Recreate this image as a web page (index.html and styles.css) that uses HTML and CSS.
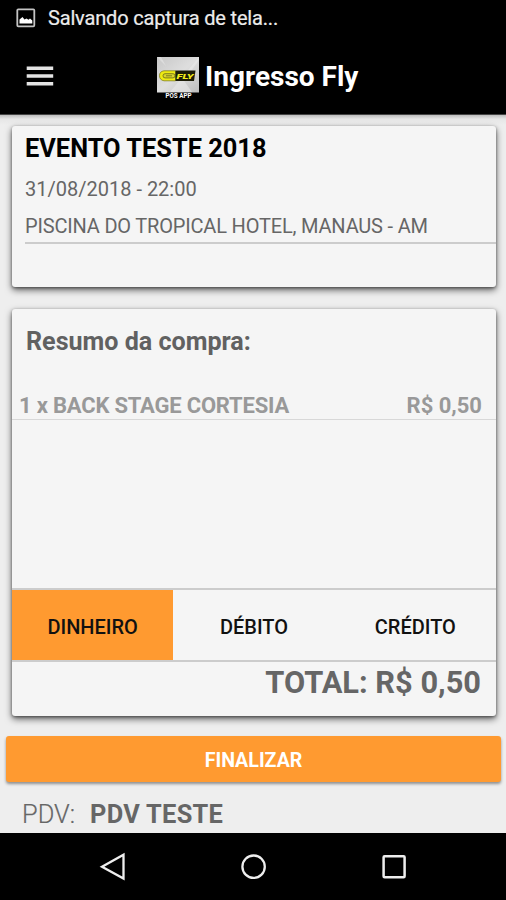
FILE: index.html
```html
<!DOCTYPE html>
<html lang="pt-BR">
<head>
<meta charset="utf-8">
<title>Ingresso Fly</title>
<link rel="stylesheet" href="styles.css">
</head>
<body>
<div class="screen">
  <div class="status">
    <svg class="status-icon" width="20" height="20" viewBox="0 0 20 20"><rect x="1.3" y="1.3" width="17" height="17" rx="1" fill="none" stroke="#c4c4c4" stroke-width="1.8"/><path d="M3.5 15.500V11.500L6.500 9L8.500 11.500L10.500 10.500L12.500 11.800L14 10.500L16.300 12.500V15.500Z" fill="#fff"/></svg>
    <span class="status-text">Salvando captura de tela...</span>
  </div>
  <header class="appbar">
    <svg class="menu" width="28" height="20" viewBox="0 0 28 20"><path d="M.7 2.300H27.200M.7 10H27.200M.7 17.700H27.200" stroke="#e4e4e4" stroke-width="3.400"/></svg>
    <svg class="logo" width="44" height="44" viewBox="0 0 44 44">
      <defs><linearGradient id="g" x1="0" y1="0" x2="1" y2="1"><stop offset="0" stop-color="#c8c8c8"/><stop offset=".5" stop-color="#dedede"/><stop offset="1" stop-color="#bdbdbd"/></linearGradient></defs>
      <rect x="1" y="1" width="42" height="35.500" fill="url(#g)"/>
      <path d="M1 1L10 10L5 1ZM26 22L36 36H14ZM43 4L20 36H14L43 1Z" fill="#eee" opacity=".5"/>
      <path d="M8 14.800H19.500V24.800H8Q3.500 24 3.500 19.700T8 14.800Z" fill="#eeea12" stroke="#777510" stroke-width=".7"/>
      <rect x="7" y="17.700" width="12" height="4.200" rx="2.100" fill="#d8d42c" stroke="#66651a" stroke-width=".8"/>
      <path d="M10 19.800H16" stroke="#66651a" stroke-width=".8"/>
      <path d="M19.500 14.500H39.500L38 25H19.500Z" fill="#1c1c08"/>
      <text class="logo-fly" x="20.500" y="23.300" textLength="17" lengthAdjust="spacingAndGlyphs">FLY</text>
      <text class="logo-app" x="9.500" y="42" textLength="26" lengthAdjust="spacingAndGlyphs">POS APP</text>
    </svg>
    <h1 class="title">Ingresso Fly</h1>
  </header>
  <main class="content">
    <section class="card event">
      <h2 class="event-name">EVENTO TESTE 2018</h2>
      <p class="event-date">31/08/2018 - 22:00</p>
      <p class="event-place">PISCINA DO TROPICAL HOTEL, MANAUS - AM</p>
    </section>
    <section class="card summary">
      <h3 class="summary-title">Resumo da compra:</h3>
      <div class="item"><span class="item-name">1 x BACK STAGE CORTESIA</span><span class="item-price">R$ 0,50</span></div>
      <div class="methods">
        <div class="method active"><span>DINHEIRO</span></div>
        <div class="method"><span>DÉBITO</span></div>
        <div class="method"><span>CRÉDITO</span></div>
      </div>
      <div class="total"><span>TOTAL: R$ 0,50</span></div>
    </section>
    <button class="finish">FINALIZAR</button>
    <p class="pdv"><span class="pdv-label">PDV:</span><span class="pdv-name">PDV TESTE</span></p>
  </main>
  <nav class="navbar">
    <svg width="28" height="30" viewBox="0 0 28 30"><path d="M3 14.700L24.500 2.800V26.600Z" fill="none" stroke="#eee" stroke-width="2.300"/></svg>
    <svg width="28" height="30" viewBox="0 0 28 30"><circle cx="13.600" cy="14.700" r="11.200" fill="none" stroke="#eee" stroke-width="2.300"/></svg>
    <svg width="28" height="30" viewBox="0 0 28 30"><rect x="2.600" y="4.200" width="21" height="21" rx="1" fill="none" stroke="#eee" stroke-width="2.500"/></svg>
  </nav>
</div>
</body>
</html>
```
FILE: styles.css
```css
* { box-sizing: border-box; margin: 0; padding: 0; }
body { font-family: Roboto, "Liberation Sans", sans-serif; background: #000; }
.screen { width: 506px; height: 900px; display: flex; flex-direction: column; overflow: hidden; background: #eee; white-space: nowrap; }
.status { height: 38px; background: #000; display: flex; align-items: center; padding-left: 16px; }
.status-icon { margin-right: 12px; margin-top: -3px; }
.status-text { color: #ececec; font-size: 20px; line-height: 36px; letter-spacing: -0.17px; margin-top: -2px; -webkit-text-stroke: .2px #ececec; }
.appbar { height: 77px; background: #000; display: flex; align-items: center; padding-left: 26px; border-bottom: 1px solid #444; }
.menu { margin-top: -1px; }
.logo { margin-left: 102px; margin-top: 4px; }
.logo-fly { font-size: 8px; font-weight: 900; font-style: italic; fill: #f3ee1c; }
.logo-app { font-size: 6.5px; font-weight: 700; fill: #fff; }
.title { color: #fff; font-size: 28px; font-weight: 700; margin-left: 5px; margin-top: 1px; }
.content { height: 718px; padding: 11px 10px 0 12px; background: linear-gradient(#bdbdbd 0, #e6e6e6 4px, #eee 10px); }
.card { width: 484px; background: #f5f5f5; border-radius: 3px; box-shadow: 0 3px 7px rgba(0,0,0,.6), 0 1px 3px rgba(0,0,0,.4); }
.event { height: 161px; padding: 7px 0 0 13px; }
.event-name { font-size: 25.4px; font-weight: 700; line-height: 30px; color: #000; }
.event-date { font-size: 20px; line-height: 24px; margin-top: 14px; color: #666; }
.event-place { font-size: 20px; line-height: 24px; letter-spacing: -0.18px; margin-top: 13px; border-bottom: 2px solid #ccc; color: #666; box-sizing: content-box; height: 28px; }
.summary { height: 407px; margin-top: 22px; display: flex; flex-direction: column; }
.summary-title { font-size: 25.1px; font-weight: 700; line-height: 30px; margin: 18px 0 0 14px; color: #616161; }
.item { display: flex; justify-content: space-between; margin-top: 33px; padding: 0 14px 0 7px; height: 30px; border-bottom: 1px solid #d8d8d8; font-size: 22px; line-height: 32px; font-weight: 700; color: #999; }
.item-name { letter-spacing: -0.2px; }
.methods { margin-top: auto; height: 74px; display: grid; grid-template-columns: repeat(3, 1fr); border-top: 2px solid #ccc; border-bottom: 2px solid #ccc; }
.method { display: flex; align-items: center; justify-content: center; font-size: 20px; font-weight: 500; color: #111; padding-top: 3px; }
.active { background: #ff9a30; }
.total { height: 54px; padding-right: 15px; text-align: right; font-size: 30.8px; line-height: 42px; font-weight: 700; color: #666; }
.finish { display: block; width: 495px; height: 46px; margin: 20px 0 0 -6px; padding-top: 2px; border: 0; border-radius: 3px; background: #ff9a30; color: #fff; font: 700 19.6px Roboto, sans-serif; box-shadow: 0 2px 3px rgba(0,0,0,.4); }
.pdv { margin: 16px 0 0 10px; font-size: 25.4px; line-height: 32px; color: #666; }
.pdv-label { display: inline-block; width: 68px; font-weight: 300; -webkit-text-stroke: .2px #666; }
.pdv-name { font-weight: 700; letter-spacing: .3px; }
.navbar { height: 67px; background: #000; display: flex; align-items: center; padding-left: 99px; gap: 113px; }
```
